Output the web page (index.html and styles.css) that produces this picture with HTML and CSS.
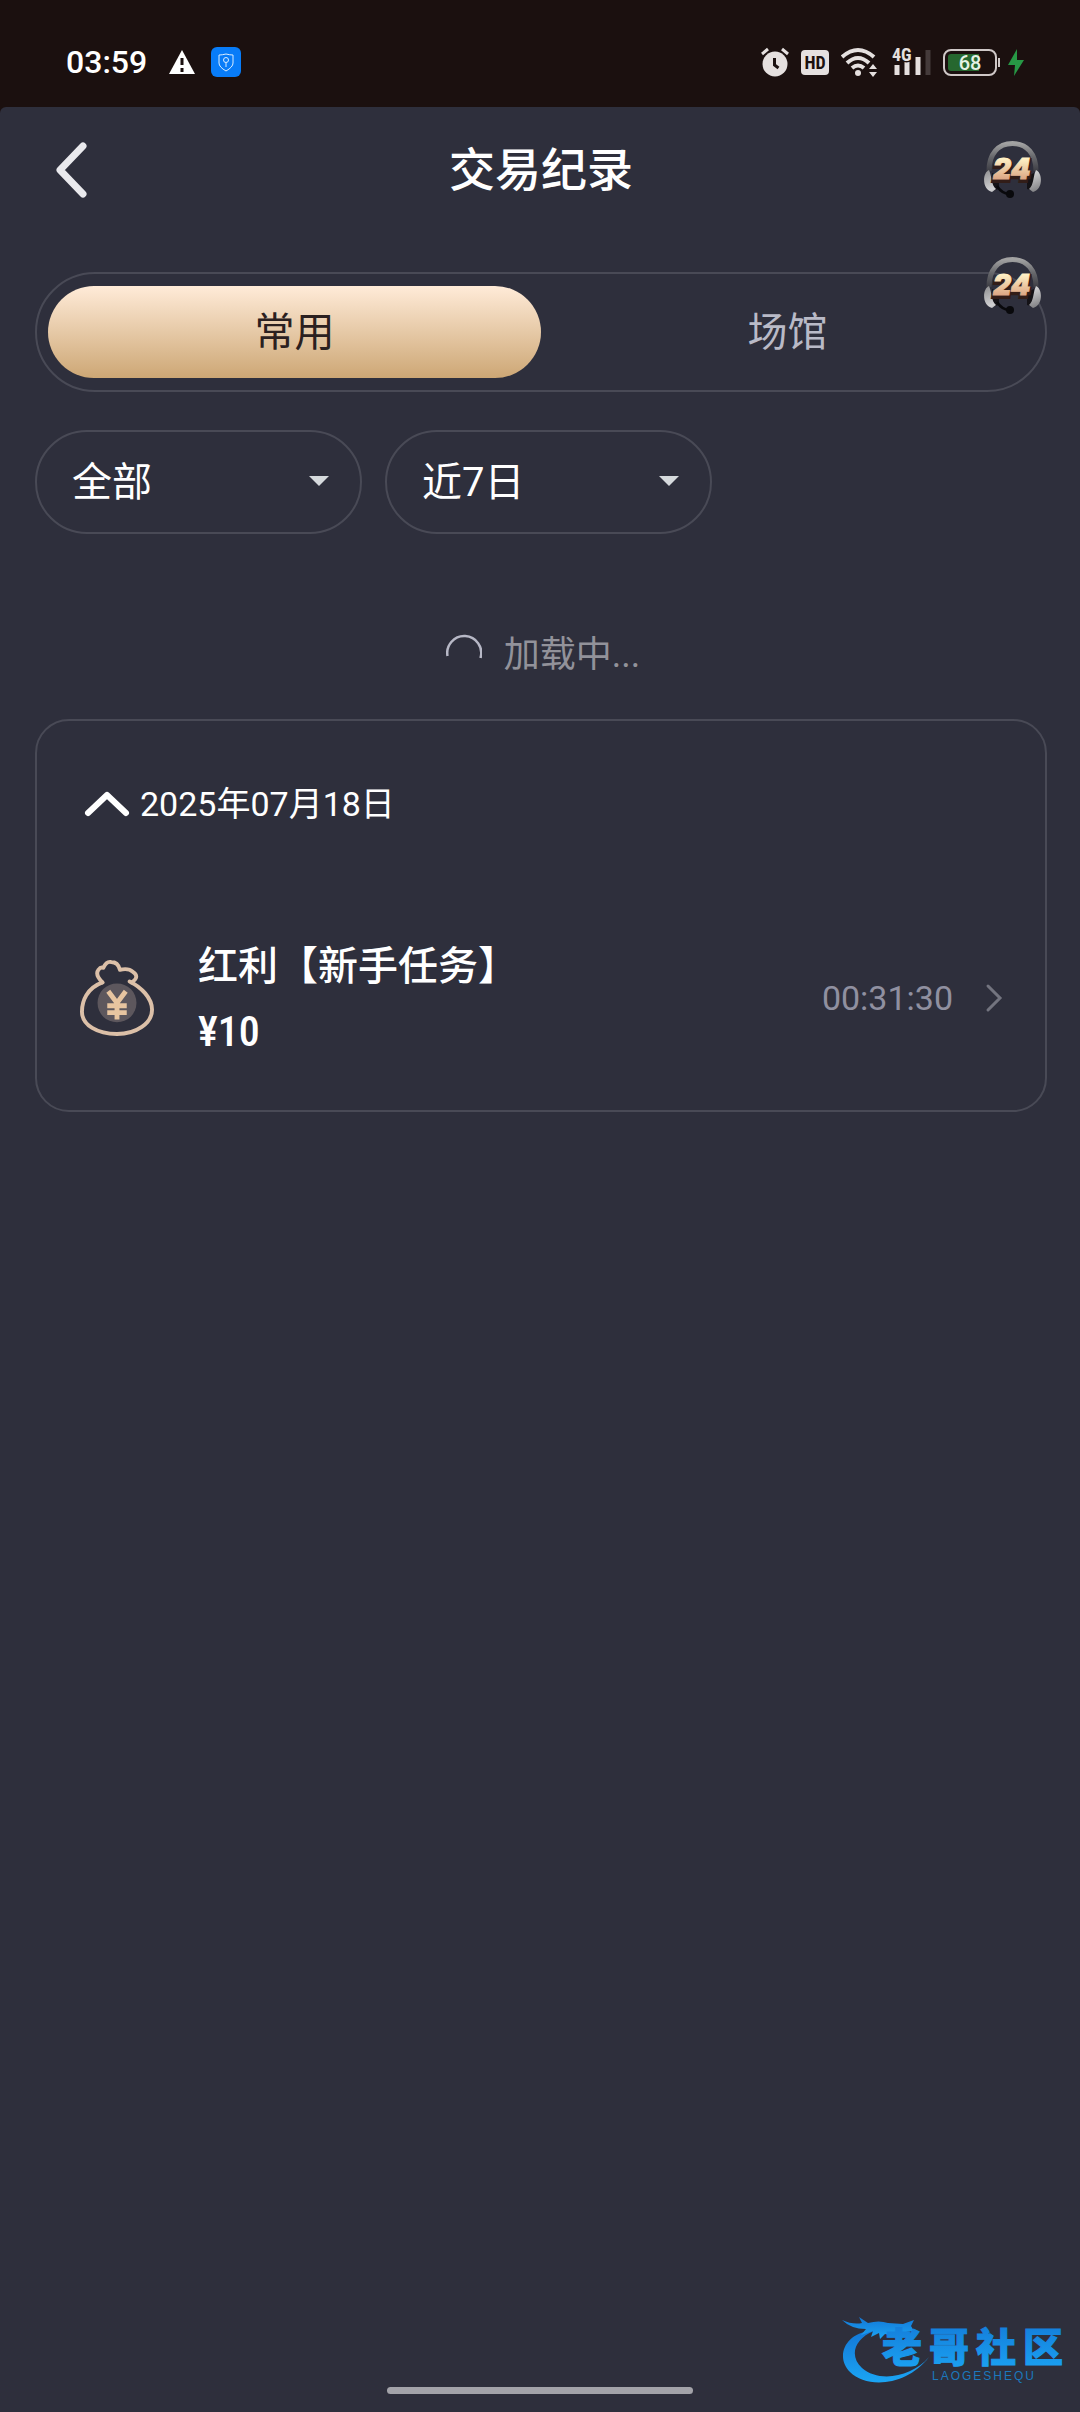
FILE: index.html
```html
<!DOCTYPE html>
<html lang="zh-CN">
<head>
<meta charset="utf-8">
<meta name="viewport" content="width=device-width, initial-scale=1">
<title>交易纪录</title>
<link rel="stylesheet" href="styles.css">
</head>
<body>
<svg class="defs" aria-hidden="true">
  <defs>
    <linearGradient id="gold" x1="0" y1="0" x2="0" y2="1"><stop offset="0.2" stop-color="#fff0c4"/><stop offset="0.8" stop-color="#dca684"/></linearGradient>
    <linearGradient id="band" x1="0" y1="0" x2="0" y2="1"><stop offset="0" stop-color="#a2a2a2"/><stop offset="0.5" stop-color="#66676b"/><stop offset="1" stop-color="#3e3e45"/></linearGradient>
    <linearGradient id="ear" x1="0" y1="0" x2="1" y2="1"><stop offset="0" stop-color="#8e8e90"/><stop offset="0.5" stop-color="#d0d0d2"/><stop offset="1" stop-color="#77777a"/></linearGradient>
    <linearGradient id="aqua" x1="0" y1="0" x2="0" y2="1"><stop offset="0" stop-color="#1377d6"/><stop offset="1" stop-color="#1ba5f4"/></linearGradient>
    <symbol id="headset" viewBox="0 0 60 60">
      <path d="M6 31C6 14 15 3.500 29.500 3.500S53 14 53 31" fill="none" stroke="url(#band)" stroke-width="5"/>
      <path d="M9 33l7 3v13l-7 2zM51 33l-7 3v13l7 2z" fill="#141216"/>
      <path d="M6 30C-1 33-1 50 9 52l4-3C8 45 9 36 6 30zM53 30c7 3 7 20-3 22l-4-3c5-4 4-13 7-19z" fill="url(#ear)"/>
      <path d="M14 46q5 8 13 8" fill="none" stroke="#09090c" stroke-width="2.500"/>
      <circle cx="27" cy="54" r="4" fill="#09090c"/>
      <text class="badge-number badge-edge" x="10" y="41">24</text>
      <text class="badge-number" x="10" y="39" fill="url(#gold)" stroke="url(#gold)">24</text>
    </symbol>
  </defs>
</svg>

<div class="status-bar">
  <div class="status-left">
    <span class="clock">03:59</span>
    <svg class="warn" viewBox="0 0 26 24"><path d="M13 0l13 24H0z" fill="#fff"/><path d="M13 8v7M13 18v4" stroke="#1b100f" stroke-width="3"/></svg>
    <svg class="shield" viewBox="0 0 30 30"><rect width="30" height="30" rx="6" fill="#087cf8"/><path d="M15 7q4 1 7 1v8q0 4-7 8-7-4-7-8V8q3 0 7-1z" fill="none" stroke="#d9edff"/><circle cx="15" cy="13" r="2.500" fill="none" stroke="#d9edff"/><path d="M15 15.500V20" stroke="#d9edff"/></svg>
  </div>
  <div class="status-right">
    <svg width="28" height="30" viewBox="0 0 28 30"><circle cx="14" cy="17" r="12.500" fill="#e5e0df"/><path d="M1 7l6-5M27 7l-6-5" stroke="#e5e0df" stroke-width="3"/><path d="M13.500 11v7l4 3" fill="none" stroke="#1b100f" stroke-width="3"/></svg>
    <svg width="28" height="30" viewBox="0 0 28 30"><rect y="3" width="28" height="25" rx="4" fill="#e5e0df"/><text class="hd-text" x="14" y="22">HD</text></svg>
    <svg width="38" height="30" viewBox="0 0 38 30"><path d="M1 10q16-14 32 0M6 16q11-10 22 0M11 21q6-5 12 0" fill="none" stroke="#e5e0df" stroke-width="4"/><circle cx="17" cy="26" r="3" fill="#e5e0df"/><path d="M28 22l4-5 4 5zM28 25l4 5 4-5z" fill="#e5e0df"/></svg>
    <svg class="signal" width="40" height="30" viewBox="0 0 40 30"><path d="M6 18v10M16 14v14M27 10v18" stroke="#e5e0df" stroke-width="5"/><path d="M37 3v25" stroke="#443a3a" stroke-width="5"/><text class="net-text" x="1" y="14">4G</text></svg>
    <svg width="58" height="30" viewBox="0 0 58 30"><rect x="1" y="3" width="52" height="25" rx="7" fill="none" stroke="#cfc8c7" stroke-width="2"/><path d="M8 7h28v17H8q-3 0-3-3V10q0-3 3-3z" fill="#26672f"/><path d="M56 11v9" stroke="#cfc8c7" stroke-width="2"/><text class="battery-text" x="27" y="23">68</text></svg>
    <svg width="16" height="30" viewBox="0 0 16 30"><path d="M9 2L0 18h7L6 29 16 13H9z" fill="#279845"/></svg>
  </div>
</div>

<main class="page">
  <header class="top-bar">
    <button class="icon-button" aria-label="返回"><svg width="32" height="56" viewBox="0 0 32 56"><path d="M28 4L5 28l23 24" fill="none" stroke="#e9e9ed" stroke-width="7" stroke-linecap="round" stroke-linejoin="round"/></svg></button>
    <h1>交易纪录</h1>
    <button class="icon-button service" aria-label="在线客服"><svg width="60" height="60"><use href="#headset"/></svg></button>
  </header>

  <div class="content">
    <div class="tabs" role="tablist">
      <button class="tab active" role="tab" aria-selected="true">常用</button>
      <button class="tab" role="tab" aria-selected="false">场馆</button>
      <button class="icon-button floating-service" aria-label="客服"><svg width="60" height="60"><use href="#headset"/></svg></button>
    </div>

    <div class="filters">
      <div class="filter">
        <select aria-label="交易类型"><option>全部</option></select>
        <svg class="caret" viewBox="0 0 20 10"><path d="M0 0h20L10 10z" fill="#d6dadd"/></svg>
      </div>
      <div class="filter">
        <select aria-label="时间范围"><option>近7日</option></select>
        <svg class="caret" viewBox="0 0 20 10"><path d="M0 0h20L10 10z" fill="#d6dadd"/></svg>
      </div>
    </div>

    <div class="loading" role="status">
      <svg width="36" height="36" viewBox="0 0 36 36"><path d="M1.500 23a17 17 0 1 1 33 2" fill="none" stroke="#b7b8c6" stroke-width="2.500"/></svg>
      <span>加载中...</span>
    </div>

    <section class="card">
      <button class="date-row" aria-expanded="true">
        <svg width="46" height="26" viewBox="0 0 46 26"><path d="M4 22L23 4l19 18" fill="none" stroke="#fff" stroke-width="6" stroke-linecap="round" stroke-linejoin="round"/></svg>
        <span>2025年07月18日</span>
      </button>
      <a class="record" href="#">
        <svg class="bag" viewBox="0 0 76 80"><path d="M23 24C7 30 2 43 2 54c0 14 16 23 36 23s36-11 36-25c0-12-11-23-23-29" fill="none" stroke="#dcc0a8" stroke-width="4" stroke-linecap="round"/><path d="M23 24q-8-8-4-13 2-3 5-2 3-7 8-6 7 0 9 8 9-2 13 2 8 5-1 11" fill="none" stroke="#dcc0a8" stroke-width="4" stroke-linecap="round" stroke-linejoin="round"/><circle cx="38" cy="45" r="20" fill="#5d575d"/><path d="M29 33l9 12 9-12M38 45v17M28 48h20M28 55h20" fill="none" stroke="#e8c5a0" stroke-width="5"/></svg>
        <span class="record-main">
          <span class="record-title">红利【新手任务】</span>
          <span class="amount">¥10</span>
        </span>
        <time>00:31:30</time>
        <svg width="18" height="30" viewBox="0 0 18 30"><path d="M3 3l12 12L3 27" fill="none" stroke="#73747f" stroke-width="3" stroke-linecap="round"/></svg>
      </a>
    </section>
  </div>
</main>

<div class="watermark">
  <svg width="226" height="76" viewBox="0 0 226 76">
    <path d="M30 17C4 19-6 43 9 58c17 17 57 14 79-15-17 20-50 26-67 11C8 42 13 25 33 17z" fill="url(#aqua)"/>
    <path d="M1 6q11 5 20 3l-3-6 9 6q11-3 20 0l15 1 11-4-3 6 3 5-8 1 4 3-7-2-9 3-9-2-5 5-1-6-8 4 2-6-12 4 5-6Q10 15 1 6z" fill="url(#aqua)"/>
    <text class="brand" x="41" y="48" fill="url(#aqua)" stroke="url(#aqua)">老</text>
    <text class="brand" x="88" y="48" fill="url(#aqua)" stroke="url(#aqua)">哥</text>
    <text class="brand" x="135" y="48" fill="url(#aqua)" stroke="url(#aqua)">社</text>
    <text class="brand" x="182" y="48" fill="url(#aqua)" stroke="url(#aqua)">区</text>
    <text class="brand-latin" x="91" y="66">LAOGESHEQU</text>
  </svg>
</div>
<div class="home-indicator"></div>
</body>
</html>
```

FILE: styles.css
```css
* { box-sizing: border-box; }

body {
  margin: 0;
  min-height: 100vh;
  position: relative;
  background: #1b100f;
  color: #fff;
  font-family: Roboto, "Noto Sans CJK SC", sans-serif;
  display: flex;
  flex-direction: column;
}

button, select {
  font: inherit;
  color: inherit;
  background: none;
  border: 0;
  padding: 0;
}

svg { display: block; flex: none; }
.defs { position: absolute; width: 0; height: 0; }

.status-bar {
  display: flex;
  justify-content: space-between;
  align-items: center;
  padding: 38px 56px 22px 66px;
  height: 107px;
}
.status-left { display: flex; align-items: center; }
.clock { font-size: 32px; font-weight: 500; line-height: 40px; }
.warn { width: 26px; height: 24px; margin-left: 22px; }
.shield { width: 30px; height: 30px; margin-left: 16px; }
.status-right { display: flex; align-items: center; gap: 12px; }
.status-right svg:last-child { margin-left: -5px; }
.signal { overflow: visible; }
.hd-text { font: 700 18px "Roboto Condensed", Roboto, sans-serif; text-anchor: middle; fill: #1b100f; }
.net-text { font: 700 18px "Roboto Condensed", Roboto, sans-serif; fill: #e5e0df; stroke: #1b100f; stroke-width: 3px; paint-order: stroke; }
.battery-text { font: 500 20px Roboto, sans-serif; text-anchor: middle; fill: #e5f2e5; }

.page {
  flex: 1;
  background: #2e2f3c;
  border-radius: 6px 6px 0 0;
}
.top-bar {
  display: grid;
  grid-template-columns: 60px 1fr 60px;
  align-items: center;
  height: 126px;
  padding: 0 37px 0 55px;
}
h1 {
  margin: 0;
  padding-right: 16px;
  text-align: center;
  font-size: 46px;
  font-weight: 500;
  line-height: 60px;
}
.content { padding: 39px 33px 0 35px; }

.tabs {
  position: relative;
  display: grid;
  grid-template-columns: 1fr 1fr;
  height: 120px;
  padding: 12px 11px;
  border: 2px solid #494a56;
  border-radius: 60px;
}
.tab { padding-bottom: 6px; border-radius: 46px; font-size: 40px; color: #b9bac7; }
.tab.active { background: linear-gradient(#ffebd8, #cda775); color: #2b2020; }
.floating-service { position: absolute; top: -18px; right: 2px; }

.filters { display: flex; gap: 23px; margin-top: 38px; }
.filter { position: relative; width: 327px; }
.filter select {
  appearance: none;
  display: block;
  width: 100%;
  height: 104px;
  padding: 0 80px 0 35px;
  border: 2px solid #494a56;
  border-radius: 52px;
  font-size: 40px;
}
.caret { position: absolute; right: 33px; top: 46px; width: 20px; height: 10px; pointer-events: none; }

.loading {
  display: flex;
  justify-content: center;
  align-items: center;
  gap: 22px;
  height: 78px;
  margin: 78px 0 29px;
  padding-left: 4px;
  color: #92929a;
  font-size: 36px;
}

.card {
  border: 2px solid #494a56;
  border-radius: 34px;
  padding: 60px 42px 51px 43px;
}
.date-row { display: flex; align-items: center; gap: 10px; margin-left: 4px; font-size: 34px; line-height: 46px; }
.record {
  display: flex;
  align-items: center;
  margin-top: 110px;
  color: inherit;
  text-decoration: none;
}
.bag { width: 74px; height: 78px; }
.record-main { display: flex; flex-direction: column; flex: 1; gap: 8px; padding-left: 44px; }
.record-title { font-size: 40px; font-weight: 500; line-height: 60px; }
.amount { font: 500 42px/54px "Roboto Condensed", "Liberation Sans Narrow", Roboto, sans-serif; }
time { color: #9090a0; font-size: 34px; line-height: 46px; margin-right: 32px; }

.watermark { position: absolute; right: 13px; bottom: 22px; }
.brand { font: 900 40px "Noto Sans CJK SC", sans-serif; stroke-width: 1px; }
.brand-latin { font: 12px "Liberation Sans", sans-serif; letter-spacing: 2px; fill: #1b78bd; }
.badge-number { font: italic 900 28px Inter, sans-serif; stroke-width: 1px; }
.badge-edge { fill: #55301f; stroke: #321d18; stroke-width: 4px; }

.home-indicator {
  position: absolute;
  bottom: 18px;
  left: 50%;
  width: 306px;
  height: 7px;
  margin-left: -153px;
  border-radius: 4px;
  background: #a3a3a9;
}
```
